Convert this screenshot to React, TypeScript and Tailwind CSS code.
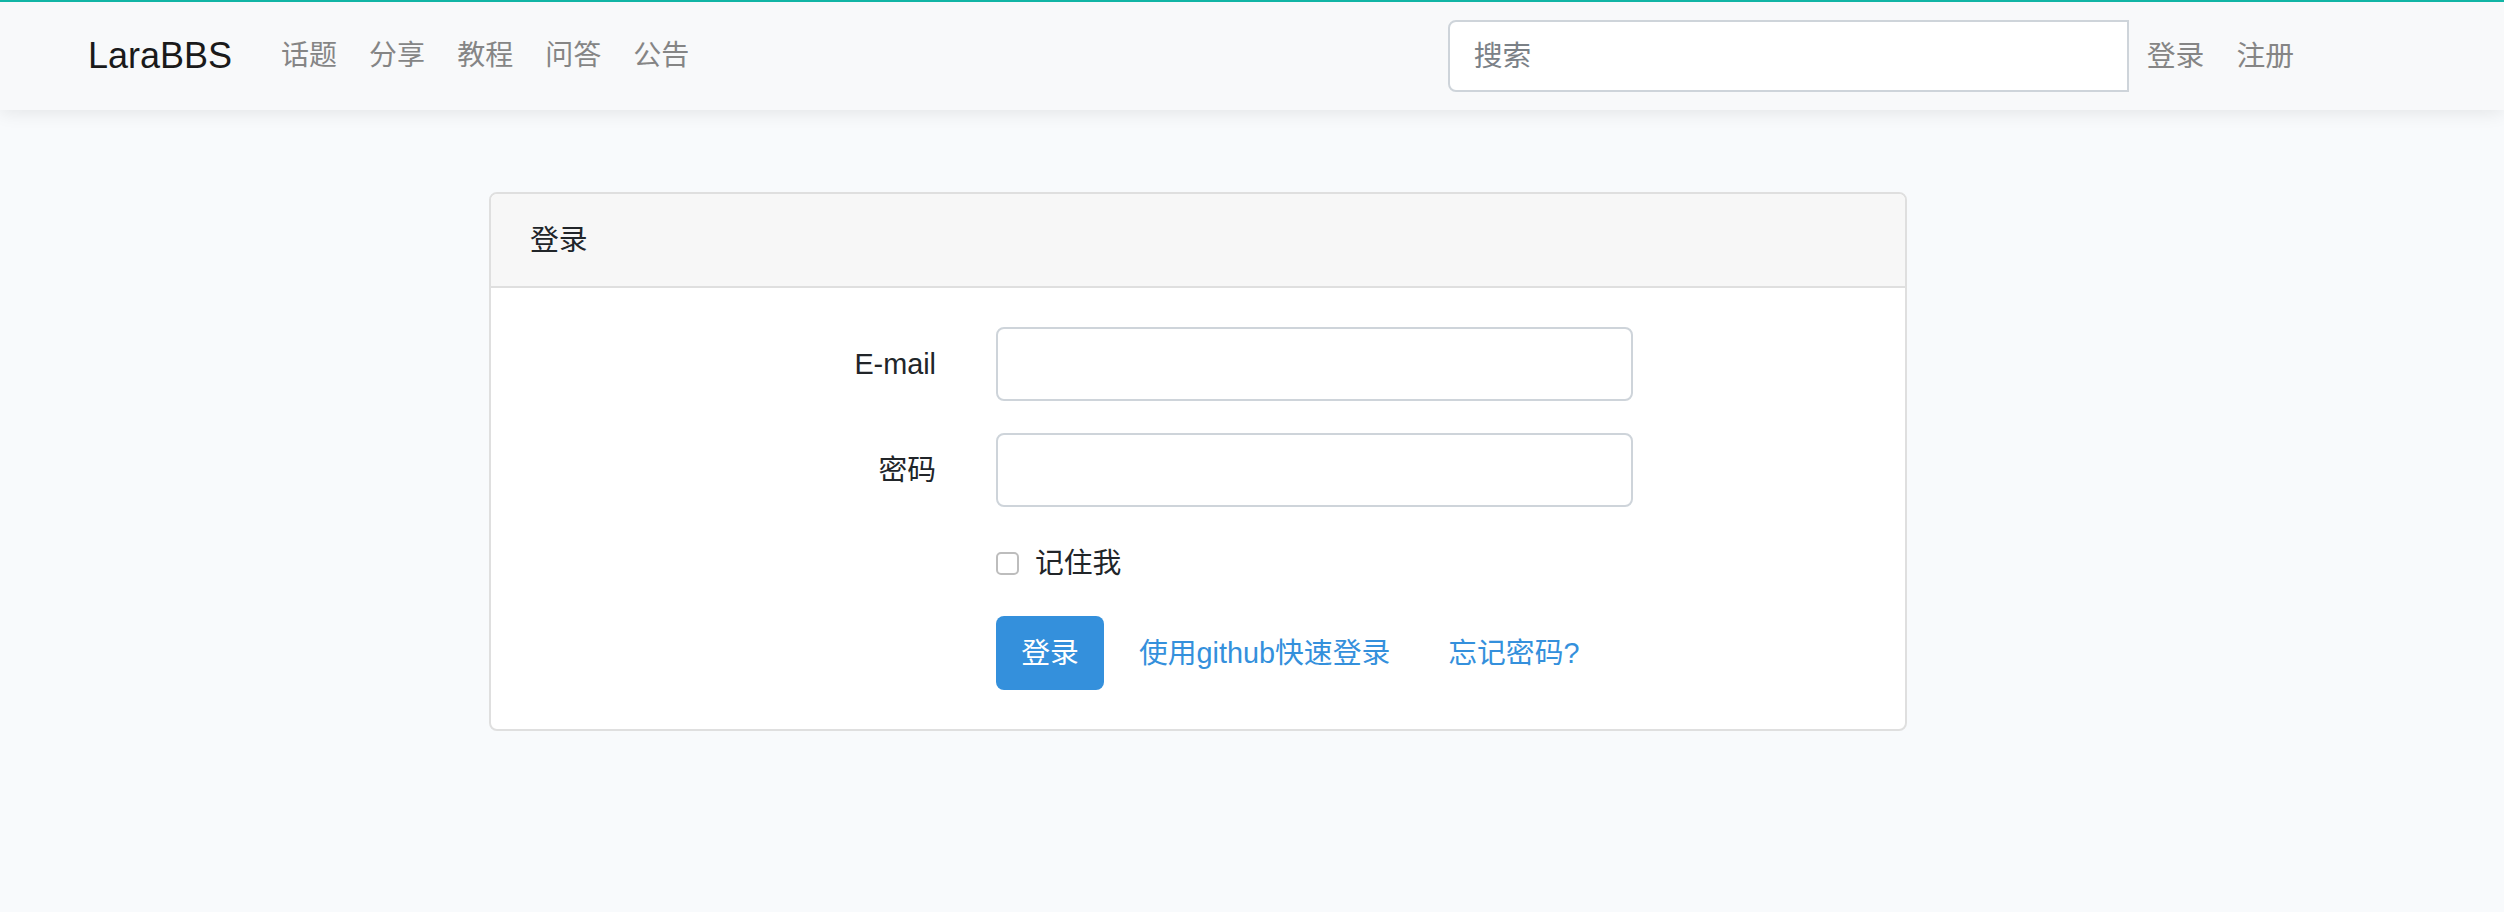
import React from "react";

export default function App() {
  return (
    <div
      className="min-h-[912px] bg-[#f8fafc] text-[#212529]"
      style={{ fontFamily: '"Liberation Sans", "Noto Sans CJK SC", sans-serif' }}
    >
      <nav className="relative z-10 flex h-[110px] items-center border-t-[2px] border-[#11b5a5] bg-[#f8f9fa] pl-[88px] pr-[194px] shadow-[0_2px_18px_rgba(0,0,0,0.09)]">
        <span className="mr-[33px] text-[36px] leading-[46px] text-[#1a1a1a]">LaraBBS</span>
        <div className="flex items-center">
          {["话题", "分享", "教程", "问答", "公告"].map((t) => (
            <a key={t} className="px-[16px] text-[28px] leading-[46px] text-[#858585]">
              {t}
            </a>
          ))}
        </div>
        <div className="ml-auto flex items-center">
          <div className="flex h-[72px] w-[681px] items-center rounded-l-[8px] border-[2px] border-[#ced4da] bg-white pl-[24px]">
            <span className="text-[28.8px] leading-[46px] text-[#7b8187]">搜索</span>
          </div>
          <a className="ml-[2px] px-[16px] text-[28.8px] leading-[46px] text-[#858585]">登录</a>
          <a className="px-[16px] text-[28.8px] leading-[46px] text-[#858585]">注册</a>
        </div>
      </nav>

      <div className="pl-[489px] pt-[82px]">
        <div className="w-[1418px] overflow-hidden rounded-[8px] border-[2px] border-[#dfdfdf] bg-white">
          <div className="border-b-[2px] border-[#dfdfdf] bg-[#f7f7f7] px-[39px] py-[23px]">
            <span className="text-[28.8px] leading-[46px]">登录</span>
          </div>
          <div className="pb-[39px] pt-[39px]">
            <div className="flex items-center">
              <div className="w-[445px] text-right text-[28.8px] leading-[46px]">E-mail</div>
              <div className="ml-[60px] h-[74px] w-[637px] rounded-[8px] border-[2px] border-[#ced4da] bg-white" />
            </div>
            <div className="mt-[32px] flex items-center">
              <div className="w-[445px] text-right text-[28.8px] leading-[46px]">密码</div>
              <div className="ml-[60px] h-[74px] w-[637px] rounded-[8px] border-[2px] border-[#ced4da] bg-white" />
            </div>
            <div className="ml-[505px] mt-[33px] flex items-center">
              <div className="h-[23px] w-[23px] rounded-[5px] border-[2px] border-[#bdbdbd] bg-white" />
              <span className="ml-[16px] text-[28.8px] leading-[46px]">记住我</span>
            </div>
            <div className="ml-[505px] mt-[30px] flex items-center">
              <button className="h-[74px] w-[108px] rounded-[8px] bg-[#3490dc] text-[28.8px] leading-[46px] text-white">
                登录
              </button>
              <a className="ml-[35px] text-[28.8px] leading-[46px] text-[#3490dc]">使用github快速登录</a>
              <a className="ml-[58px] text-[28.8px] leading-[46px] text-[#3490dc]">忘记密码?</a>
            </div>
          </div>
        </div>
      </div>
    </div>
  );
}
